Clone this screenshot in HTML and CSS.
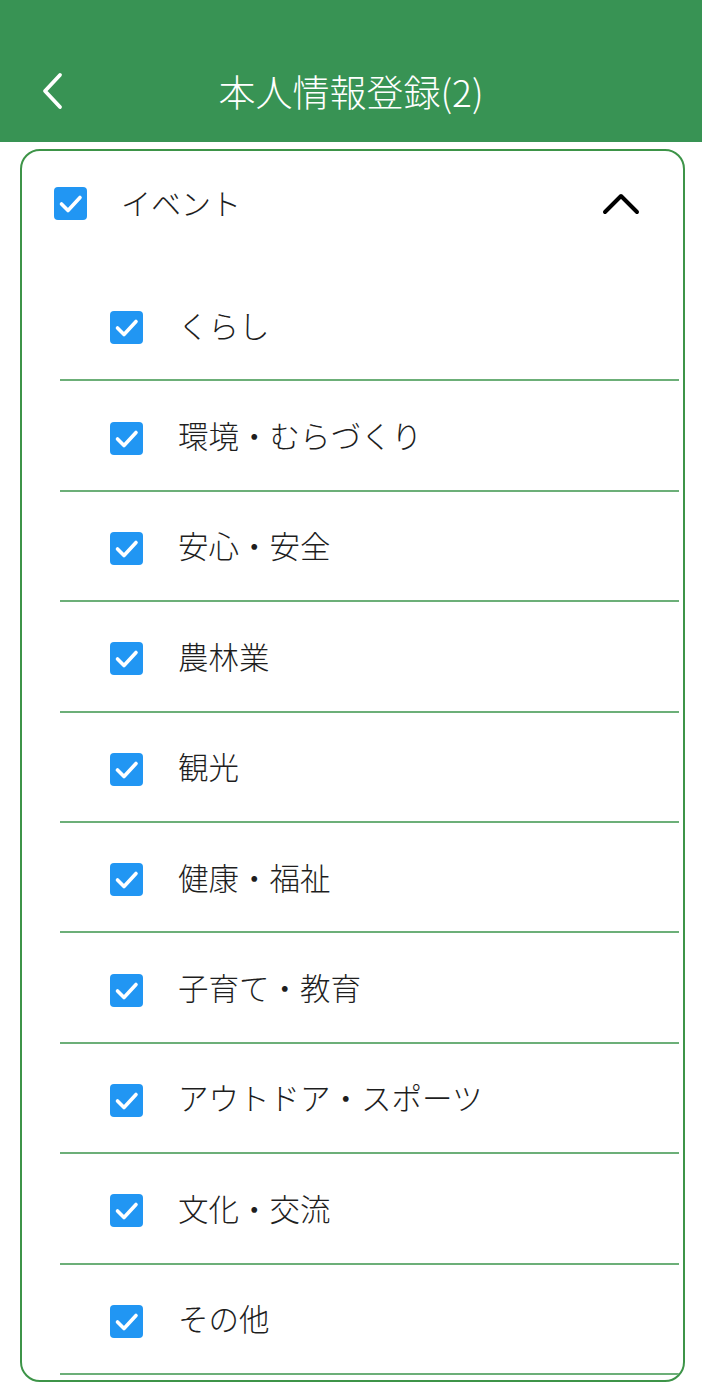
FILE: index.html
```html
<!DOCTYPE html>
<html lang="ja">
<head>
<meta charset="utf-8">
<link rel="stylesheet" href="styles.css">
</head>
<body>
<header class="appbar">
  <svg class="back" width="24" height="38" viewBox="0 0 24 38"><path d="M20 3 L5 19 L20 35" fill="none" stroke="#fff" stroke-width="3.8" stroke-linecap="round" stroke-linejoin="round"/></svg>
  <h1 class="title">本人情報登録(2)</h1>
</header>
<main class="card">
  <div class="group-head">
    <span class="cb"><svg viewBox="0 0 33 33" width="33" height="33"><path d="M7.5 17 L14 23.5 L26 10.5" fill="none" stroke="#fff" stroke-width="3.6" stroke-linecap="round" stroke-linejoin="round"/></svg></span>
    <span class="group-label">イベント</span>
    <svg class="chev" width="38" height="22" viewBox="0 0 38 22"><path d="M3 19 L19 3 L35 19" fill="none" stroke="#000" stroke-width="4" stroke-linecap="round" stroke-linejoin="round"/></svg>
  </div>
  <ul class="list">
    <li class="row"><span class="cb"><svg viewBox="0 0 33 33" width="33" height="33"><path d="M7.5 17 L14 23.5 L26 10.5" fill="none" stroke="#fff" stroke-width="3.6" stroke-linecap="round" stroke-linejoin="round"/></svg></span><span class="label">くらし</span></li>
    <li class="row"><span class="cb"><svg viewBox="0 0 33 33" width="33" height="33"><path d="M7.5 17 L14 23.5 L26 10.5" fill="none" stroke="#fff" stroke-width="3.6" stroke-linecap="round" stroke-linejoin="round"/></svg></span><span class="label">環境・むらづくり</span></li>
    <li class="row"><span class="cb"><svg viewBox="0 0 33 33" width="33" height="33"><path d="M7.5 17 L14 23.5 L26 10.5" fill="none" stroke="#fff" stroke-width="3.6" stroke-linecap="round" stroke-linejoin="round"/></svg></span><span class="label">安心・安全</span></li>
    <li class="row"><span class="cb"><svg viewBox="0 0 33 33" width="33" height="33"><path d="M7.5 17 L14 23.5 L26 10.5" fill="none" stroke="#fff" stroke-width="3.6" stroke-linecap="round" stroke-linejoin="round"/></svg></span><span class="label">農林業</span></li>
    <li class="row"><span class="cb"><svg viewBox="0 0 33 33" width="33" height="33"><path d="M7.5 17 L14 23.5 L26 10.5" fill="none" stroke="#fff" stroke-width="3.6" stroke-linecap="round" stroke-linejoin="round"/></svg></span><span class="label">観光</span></li>
    <li class="row"><span class="cb"><svg viewBox="0 0 33 33" width="33" height="33"><path d="M7.5 17 L14 23.5 L26 10.5" fill="none" stroke="#fff" stroke-width="3.6" stroke-linecap="round" stroke-linejoin="round"/></svg></span><span class="label">健康・福祉</span></li>
    <li class="row"><span class="cb"><svg viewBox="0 0 33 33" width="33" height="33"><path d="M7.5 17 L14 23.5 L26 10.5" fill="none" stroke="#fff" stroke-width="3.6" stroke-linecap="round" stroke-linejoin="round"/></svg></span><span class="label">子育て・教育</span></li>
    <li class="row"><span class="cb"><svg viewBox="0 0 33 33" width="33" height="33"><path d="M7.5 17 L14 23.5 L26 10.5" fill="none" stroke="#fff" stroke-width="3.6" stroke-linecap="round" stroke-linejoin="round"/></svg></span><span class="label">アウトドア・スポーツ</span></li>
    <li class="row"><span class="cb"><svg viewBox="0 0 33 33" width="33" height="33"><path d="M7.5 17 L14 23.5 L26 10.5" fill="none" stroke="#fff" stroke-width="3.6" stroke-linecap="round" stroke-linejoin="round"/></svg></span><span class="label">文化・交流</span></li>
    <li class="row"><span class="cb"><svg viewBox="0 0 33 33" width="33" height="33"><path d="M7.5 17 L14 23.5 L26 10.5" fill="none" stroke="#fff" stroke-width="3.6" stroke-linecap="round" stroke-linejoin="round"/></svg></span><span class="label">その他</span></li>
  </ul>
</main>
</body>
</html>
```

FILE: styles.css
```css
* { box-sizing: border-box; }
html, body { margin: 0; padding: 0; background: #fff; }
body {
  width: 702px;
  font-family: "Noto Sans CJK JP", "Noto Sans", sans-serif;
  color: #1e1e1e;
}
.appbar {
  height: 142px;
  background: #389354;
  display: flex;
  align-items: flex-end;
  justify-content: center;
  position: relative;
  padding-bottom: 26px;
}
.back {
  position: absolute;
  left: 40px;
  top: 72px;
}
.title {
  margin: 0;
  font-size: 37px;
  font-weight: 300;
  color: #fff;
  line-height: 50px;
}
.card {
  margin: 7px 17px 0 20px;
  border: 2px solid #3d9448;
  border-radius: 20px;
  padding-bottom: 5px;
  overflow: hidden;
}
.group-head {
  height: 120px;
  display: flex;
  align-items: center;
  padding: 0 43px 16px 32px;
}
.group-head .group-label {
  margin-left: 34px;
  padding-bottom: 3px;
  font-size: 30px;
  font-weight: 300;
  flex: 1;
}
.chev { display: block; margin-top: 2px; }
.cb {
  width: 33px;
  height: 33px;
  border-radius: 4px;
  background: #2196f3;
  display: flex;
  flex: none;
}
.list {
  list-style: none;
  margin: 0 4px 0 38px;
  padding: 0;
}
.row {
  height: 110.4px;
  display: flex;
  align-items: center;
  padding: 5px 0 0 50px;
  border-bottom: 2px solid #6caf78;
}
.label {
  margin-left: 35px;
  padding-bottom: 6px;
  font-size: 30.5px;
  font-weight: 300;
  line-height: 40px;
}
```
